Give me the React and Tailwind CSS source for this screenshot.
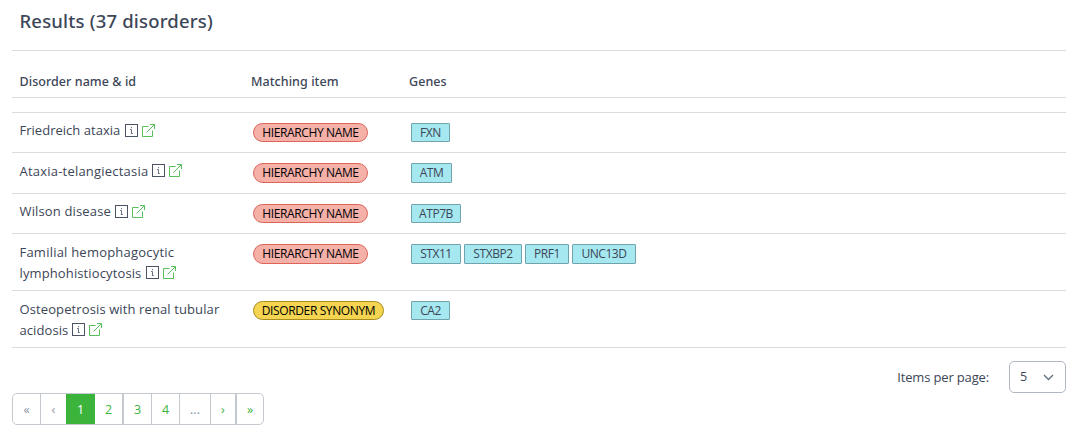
const ROWS = [
  { lines: [{ text: 'Friedreich ataxia', w: 'w-[101px]', t: 'tracking-[0.02px]' }], h: 'h-[40px]', b: 'h-[19px]', match: 'HIERARCHY NAME', genes: [['FXN', 'w-[39px]']] },
  { lines: [{ text: 'Ataxia-telangiectasia', w: 'w-[128px]', t: 'tracking-[0.21px]' }], h: 'h-[41px]', b: 'h-[20px]', match: 'HIERARCHY NAME', genes: [['ATM', 'w-[41px]']] },
  { lines: [{ text: 'Wilson disease', w: 'w-[91px]', t: 'tracking-[0.15px]' }], h: 'h-[40px]', b: 'h-[19px]', match: 'HIERARCHY NAME', genes: [['ATP7B', 'w-[50px]']] },
  {
    lines: [
      { text: 'Familial hemophagocytic', w: 'w-[156px]', t: 'tracking-[0.22px]' },
      { text: 'lymphohistiocytosis', w: 'w-[122px]', t: 'tracking-[0.12px]' },
    ],
    h: 'h-[57px]', b: 'h-[20px]', match: 'HIERARCHY NAME',
    genes: [['STX11', 'w-[50px]'], ['STXBP2', 'w-[58px]'], ['PRF1', 'w-[44px]'], ['UNC13D', 'w-[64px]']],
  },
  {
    lines: [
      { text: 'Osteopetrosis with renal tubular', w: 'w-[201px]', t: 'tracking-[0.11px]' },
      { text: 'acidosis', w: 'w-[48px]', t: 'tracking-[0.08px]' },
    ],
    h: 'h-[57px]', b: 'h-[19px]', match: 'DISORDER SYNONYM', genes: [['CA2', 'w-[39px]']],
  },
];

function InfoIcon() {
  return (
    <svg className="ml-[5px] mt-[3px] h-[13px] w-[13px] shrink-0" viewBox="0 0 13 13" fill="none" stroke="#4a5264">
      <rect x="0.5" y="0.5" width="12" height="12" />
      <path d="M6.5 3v1.2M5 5.5h1.5v4M5.8 9.5h2" stroke="#6b7280" />
    </svg>
  );
}

function LinkIcon() {
  return (
    <svg className="ml-[4px] mt-[3px] h-[13px] w-[13px] shrink-0" viewBox="0 0 13 13" fill="none" stroke="#57c05b">
      <path d="M6.5 2.5h-6v10h10v-6M4.5 8.5l8-8M8 .5h4.5V5" />
    </svg>
  );
}

function Row({ row }) {
  const red = row.match === 'HIERARCHY NAME';
  const tall = row.lines.length > 1 || row.h === 'h-[41px]';
  return (
    <div className={`flex border-b border-[#d8dbe0] ${row.h}`}>
      <div className={`w-[239px] shrink-0 pl-[7.5px] ${tall ? 'pt-[8px]' : 'pt-[7px]'}`}>
        {row.lines.map((l, i) => (
          <div key={l.text} className="flex h-[21px] text-[13px] leading-[21px]">
            <span className={`whitespace-nowrap ${l.w} ${l.t}`}>{l.text}</span>
            {i === row.lines.length - 1 && (
              <div className={`-ml-[0.5px] flex ${tall ? '' : 'pt-px'}`}>
                <InfoIcon />
                <LinkIcon />
              </div>
            )}
          </div>
        ))}
      </div>
      <div className="w-[158px] shrink-0 pl-[2px] pt-[10px]">
        <div
          className={`flex items-center justify-center whitespace-nowrap rounded-full border text-[12px] leading-none tracking-[-0.38px] text-black ${row.b} ${
            red ? 'w-[115px] border-[#dc6459] bg-[#f5b0a8]' : 'w-[131px] border-[#a88c1c] bg-[#f4d450]'
          }`}
        >
          {row.match}
        </div>
      </div>
      <div className="flex gap-[3px] pl-[2px] pt-[10px]">
        {row.genes.map(([g, w]) => (
          <div key={g} className={`flex items-center justify-center rounded-[1px] border border-[#70a3ab] bg-[#a6e8f0] text-[12px] leading-none tracking-[-0.45px] ${row.b} ${w}`}>
            {g}
          </div>
        ))}
      </div>
    </div>
  );
}

const PAGES = [
  ['«', 'w-[28px] border-r', 'text-[#8a93a2]'],
  ['‹', 'w-[25px]', 'text-[#8a93a2]'],
  ['1', 'w-[29px] -my-px bg-[#3cb43c]', 'text-white'],
  ['2', 'w-[28px] border-r', 'text-[#3cb43c]'],
  ['3', 'w-[29px] border-x', 'text-[#3cb43c]'],
  ['4', 'w-[28px] border-r', 'text-[#3cb43c]'],
  ['...', 'w-[31px] border-r', 'text-[#8a93a2]'],
  ['›', 'w-[25px] border-r', 'text-[#3cb43c]'],
  ['»', 'w-[27px] border-l', 'text-[#3cb43c]'],
];

export default function App() {
  return (
    <div className="h-[438px] w-[1073px] overflow-hidden bg-white pl-[12px] pr-[7px] font-['Open_Sans','Noto_Sans',sans-serif] text-[#3c4657]">
      <div className="flex h-[51px] border-b border-[#d8dbe0] pl-[7.5px] pt-[8px]">
        <h1 className="font-['Noto_Sans',sans-serif] text-[18.5px] font-medium leading-[26px] tracking-[0.18px]">Results (37 disorders)</h1>
      </div>
      <div className="flex h-[47px] border-b border-[#d8dbe0] pt-[21px] font-['Noto_Sans',sans-serif] text-[12.5px] font-medium leading-[20px] tracking-[0.06px]">
        <div className="w-[239px] pl-[7.5px]">Disorder name &amp; id</div>
        <div className="w-[158px]">Matching item</div>
        <div>Genes</div>
      </div>
      <div className="h-[15px] border-b border-[#d8dbe0]" />
      {ROWS.map((r) => (
        <Row key={r.lines[0].text} row={r} />
      ))}
      <div className="flex h-[45px] justify-end pt-[13px]">
        <span className="mr-[20px] text-[13px] leading-[32px] tracking-[-0.15px]">Items per page:</span>
        <div className="flex h-[32px] w-[57px] items-center justify-between rounded-[5px] border border-[#b1b7c1] pl-[10px] pr-[11px] text-[12.5px]">
          <span className="pt-px">5</span>
          <svg width="11" height="7" viewBox="0 0 11 7" fill="none" stroke="#636f83" strokeWidth="1.4">
            <path d="M1 1l4.5 4.5L10 1" />
          </svg>
        </div>
      </div>
      <div className="flex h-[32px] w-[252px] overflow-hidden rounded-[5px] border border-[#c4c9d0] text-[12.5px]">
        {PAGES.map(([t, w, c]) => (
          <div key={t} className={`flex shrink-0 items-center justify-center border-[#c4c9d0] pt-[2px] ${w} ${c}`}>
            {t}
          </div>
        ))}
      </div>
    </div>
  );
}
